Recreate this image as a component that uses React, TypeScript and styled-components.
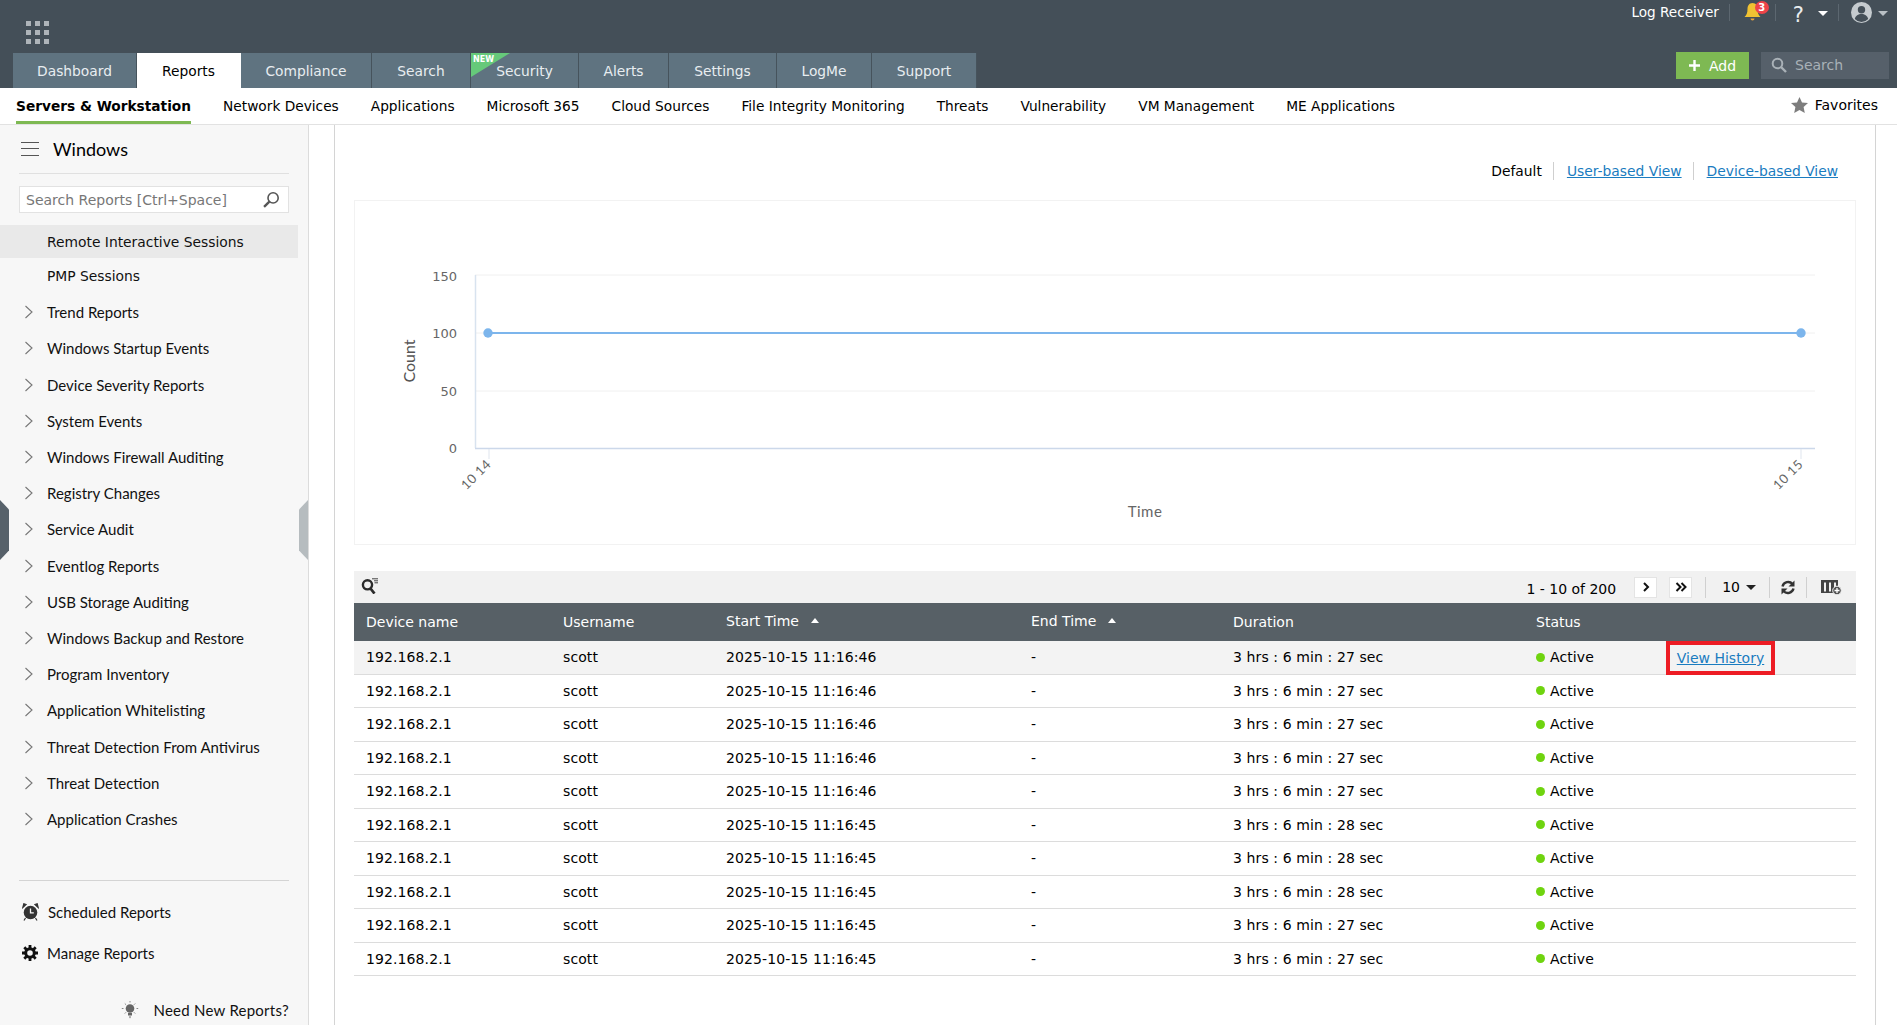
import React from 'react';
import styled, { createGlobalStyle } from 'styled-components';

const Global = createGlobalStyle`
  html, body { margin: 0; padding: 0; background: #fff; }
  body { width: 1897px; height: 1025px; overflow: hidden; font-family: "DejaVu Sans", sans-serif; font-size: 14px; color: #000; }
  * { box-sizing: border-box; }
`;
const Page = styled.div`display: flex; flex-direction: column; width: 1897px; height: 1025px; overflow: hidden;`;
const Header = styled.header`background: #444f58; height: 88px; display: flex; flex-direction: column; flex: none;`;
const TopRow = styled.div`height: 53px; display: flex; justify-content: space-between; padding: 0 9px 0 26px;`;
const AppGrid = styled.div`margin-top: 21px; width: 23px; height: 23px; display: grid; grid-template-columns: repeat(3, 5px); grid-auto-rows: 5px; justify-content: space-between; align-content: space-between;`;
const AppDot = styled.span`background: #aeb4b9;`;
const Utils = styled.div`display: flex; align-items: flex-start; height: 24px; color: #fff;`;
const UtilText = styled.span`font-size: 13.6px; line-height: 25px; color: #fff;`;
const UtilSep = styled.span<{ $ml: number }>`width: 1px; height: 17px; margin: 4px 0 0 ${p => p.$ml}px; background: #5c6770;`;
const BellWrap = styled.span`position: relative; margin-left: 14px; margin-top: 2px; width: 17px; height: 20px; display: block;`;
const Badge = styled.span`position: absolute; left: 11px; top: -1px; width: 14px; height: 13px; border-radius: 50%; background: #ee4349; color: #fff; font-size: 10px; font-weight: 700; line-height: 13px; text-align: center;`;
const Help = styled.span`font-size: 21px; line-height: 30px; margin-left: 17px; color: #e9ecee;`;
const AvatarWrap = styled.span`display: block; margin: 2px 0 0 12px;`;
const Caret = styled.span<{ $c?: string; $ml: number; $mt: number }>`width: 0; height: 0; border-left: 5px solid transparent; border-right: 5px solid transparent; border-top: 5px solid ${p => p.$c || '#fff'}; margin-left: ${p => p.$ml}px; margin-top: ${p => p.$mt}px;`;
const TabRow = styled.div`height: 35px; display: flex; justify-content: space-between; padding: 0 8px 0 13px;`;
const Tabs = styled.nav`display: flex; align-items: stretch;`;
const Tab = styled.a<{ $w: number; $active?: boolean }>`position: relative; width: ${p => p.$w}px; display: flex; align-items: center; justify-content: center; font-size: 13.8px; color: ${p => p.$active ? '#000' : '#e8edf0'}; background: ${p => p.$active ? '#fff' : '#5f7380'}; border-right: 1px solid ${p => p.$active ? '#fff' : '#46535c'};`;
const Ribbon = styled.span`position: absolute; left: 0; top: 0; width: 39px; height: 24px; background: #66c97a; clip-path: polygon(0 0, 100% 0, 0 100%); color: #fff; font-size: 8px; font-weight: 700; line-height: 13px; padding-left: 2px;`;
const TabActions = styled.div`display: flex; align-items: flex-start; gap: 12px; margin-top: -1px;`;
const AddButton = styled.button`width: 73px; height: 27px; border: 0; background: #7eb953; color: #fff; font: 14px "DejaVu Sans", sans-serif; display: flex; align-items: center; justify-content: center; gap: 9px; padding: 0;`;
const TopSearch = styled.div`width: 128px; height: 27px; background: #56606a; color: #a9b1b7; display: flex; align-items: center; gap: 8px; padding: 0 0 1px 10px; font-size: 14px;`;
const SubNav = styled.nav`height: 37px; flex: none; display: flex; align-items: stretch; padding: 0 19px 0 16px; border-bottom: 1px solid #e2e2e2; background: #fff;`;
const SubItem = styled.a<{ $active?: boolean }>`margin-right: 32px; height: 36px; line-height: 36px; font-size: 13.72px; color: #000; font-weight: ${p => p.$active ? 700 : 400}; border-bottom: 3px solid ${p => p.$active ? '#7eb953' : 'transparent'}; white-space: nowrap;`;
const Favorites = styled.div`margin-left: auto; display: flex; align-items: center; gap: 7px; font-size: 14px; height: 34px;`;
const Body = styled.div`flex: 1; display: flex; min-height: 0; position: relative;`;
const Sidebar = styled.aside`width: 309px; flex: none; background: #f7f7f7; border-right: 1px solid #dcdcdc; display: flex; flex-direction: column; font-family: Lato, sans-serif; position: relative;`;
const SideHead = styled.div`margin: 0 19px; height: 49px; display: flex; align-items: center; gap: 14px; border-bottom: 1px solid #e0e0e0; padding: 0 0 1px 2px; font-size: 18px; color: #000;`;
const Burger = styled.span`width: 18px; height: 14px; border-top: 1px solid #555; border-bottom: 1px solid #555; position: relative; &::after { content: ''; position: absolute; left: 0; right: 0; top: 5.5px; height: 1px; background: #555; }`;
const SideSearch = styled.div`margin: 12px 19px 12px; height: 27px; border: 1px solid #e2e2e2; background: #fff; display: flex; align-items: center; justify-content: space-between; padding: 0 8px 0 6px; color: #777; font-family: "DejaVu Sans", sans-serif; font-size: 14px;`;
const SideItems = styled.div`display: flex; flex-direction: column; width: 298px;`;
const LeafItem = styled.a<{ $active?: boolean }>`height: ${p => p.$active ? 33 : 36.2}px; flex: none; display: flex; align-items: center; padding-left: 47px; font-family: "DejaVu Sans", sans-serif; font-size: 13.85px; color: #111; background: ${p => p.$active ? '#e9e9e9' : 'transparent'}; white-space: nowrap;`;
const SideItem = styled.a`height: 36.2px; flex: none; display: flex; align-items: center; gap: 13px; padding-left: 24px; font-size: 15px; color: #111; white-space: nowrap;`;
const SideFoot = styled.div`position: absolute; left: 19px; right: 19px; top: 755px; border-top: 1px solid #d4d4d4; padding-top: 10px; display: flex; flex-direction: column;`;
const FootItem = styled.a`height: 41px; display: flex; align-items: center; gap: 9px; padding-left: 3px; font-size: 15px; color: #111;`;
const NeedNew = styled.a`margin-top: 28px; display: flex; justify-content: flex-end; align-items: center; gap: 14px; font-size: 15px; color: #111; letter-spacing: .25px;`;
const Handle = styled.span<{ $left: number; $dark?: boolean }>`position: absolute; left: ${p => p.$left}px; top: 375px; width: 9px; height: 60px; background: ${p => p.$dark ? '#57616a' : '#b6bcbf'}; clip-path: ${p => p.$dark ? 'polygon(0 0, 100% 16%, 100% 84%, 0 100%)' : 'polygon(100% 0, 0 16%, 0 84%, 100% 100%)'}; z-index: 2;`;
const Gutter = styled.div`width: 26px; flex: none; border-right: 1px solid #d4d4d4;`;
const Main = styled.main`width: 1541px; flex: none; border-right: 1px solid #d4d4d4; padding: 0 19px; display: flex; flex-direction: column;`;
const Views = styled.div`height: 75px; display: flex; justify-content: flex-end; align-items: flex-start; padding: 35px 18px 0 0; font-size: 13.85px;`;
const ViewText = styled.span`line-height: 22px;`;
const ViewLink = styled.a`line-height: 22px; color: #1a7cc0; text-decoration: underline;`;
const ViewSep = styled.span`width: 1px; height: 18px; margin: 2px 13px 2px 11px; background: #cfcfcf;`;
const ChartBox = styled.section`height: 345px; border: 1px solid #f2f2f2; flex: none;`;
const TableBar = styled.div`margin-top: 26px; height: 32px; background: #f1f1f1; display: flex; align-items: center; justify-content: space-between; padding: 0 14px 0 7px;`;
const BarLeft = styled.span`display: block; height: 16px; margin-top: -3px;`;
const BarRight = styled.div`display: flex; align-items: center; height: 32px;`;
const PageText = styled.span`font-size: 14px; margin-right: 18px; padding-top: 4px;`;
const PageBtn = styled.span`width: 23px; height: 21px; background: #fff; border: 1px solid #e4e4e4; display: flex; align-items: center; justify-content: center; margin-right: 12px;`;
const BarSep = styled.span<{ $ml?: number; $mr?: number }>`width: 1px; height: 21px; background: #d0d0d0; margin-left: ${p => p.$ml ?? 0}px; margin-right: ${p => p.$mr ?? 0}px;`;
const PageSize = styled.span`display: flex; align-items: center; gap: 6px; font-size: 14px;`;
const rowGrid = `display: grid; grid-template-columns: 197px 163px 305px 202px 303px 142px 1fr;`;
const HeadRow = styled.div`${rowGrid} height: 38px; background: #576066; color: #fff; font-size: 14px; align-items: center;`;
const HeadCell = styled.div<{ $up?: boolean }>`padding-left: 12px; display: flex; align-items: center; gap: 12px; margin-top: ${p => p.$up ? -3 : 0}px;`;
const SortUp = styled.span`width: 0; height: 0; border-left: 4px solid transparent; border-right: 4px solid transparent; border-bottom: 5px solid #fff;`;
const Row = styled.div<{ $first?: boolean }>`${rowGrid} height: 33.5px; align-items: center; border-bottom: 1px solid #dcdcdc; background: ${p => p.$first ? '#f3f3f3' : '#fff'}; font-size: 14px; letter-spacing: .1px;`;
const Cell = styled.div`padding-left: 12px; white-space: nowrap;`;
const StatusCell = styled(Cell)`display: flex; align-items: center; gap: 5px;`;
const Dot = styled.span`width: 9px; height: 9px; border-radius: 50%; background: #6fd40f;`;
const HistoryCell = styled.div`position: relative; align-self: stretch;`;
const History = styled.a`position: absolute; left: 0; top: 0; width: 109px; height: 34px; border: 4px solid #ed1c24; display: flex; align-items: center; justify-content: center; color: #1a7cc0; text-decoration: underline; font-size: 14px; letter-spacing: 0; z-index: 1;`;

const Chevron = () => (
  <svg width="10" height="14" viewBox="0 0 10 14" fill="none"><path d="M1.5 1l6.5 6-6.5 6" stroke="#777" strokeWidth="1.1" /></svg>
);
const Loupe = ({ c, s, sw = 2 }: { c: string; s: number; sw?: number }) => (
  <svg width={s} height={s} viewBox="0 0 16 16" fill="none"><circle cx="6.5" cy="6.5" r="4.8" stroke={c} strokeWidth={sw} /><path d="M10 10l5 5" stroke={c} strokeWidth={sw + 0.4} /></svg>
);
const LoupeFlipped = () => (
  <svg width="17" height="17" viewBox="0 0 16 16" fill="none"><circle cx="9.5" cy="6.5" r="4.800" stroke="#555" strokeWidth="1.500" /><path d="M6 10l-5 5" stroke="#555" strokeWidth="2.200" /></svg>
);
const Bell = () => (
  <svg width="17" height="20" viewBox="0 0 17 20"><path d="M8.5 1C5 1 3.5 4 3.5 7c0 4-1 6-3 8h16c-2-2-3-4-3-8 0-3-1.500-6-5-6z" fill="#f1c232" /><path d="M6.500 16.500h4a2 2 0 0 1-4 0z" fill="#e8a33a" /></svg>
);
const Avatar = () => (
  <svg width="21" height="21" viewBox="0 0 21 21"><circle cx="10.500" cy="10.500" r="10.500" fill="#c5cbcf" /><circle cx="10.500" cy="7.800" r="3.700" fill="#444f58" /><path d="M3.800 17c.8-3.500 3.500-5 6.700-5s5.900 1.500 6.700 5a9 9 0 0 1-13.400 0z" fill="#444f58" /></svg>
);
const Star = () => (
  <svg width="17" height="16" viewBox="0 0 17 16"><path d="M8.500 0l2.500 5.400 6 .7-4.400 4 1.200 5.900-5.300-3-5.300 3 1.200-5.900L.0 6.100l6-.7z" fill="#7d7d7d" /></svg>
);
const Clock = () => (
  <svg width="17" height="18" viewBox="0 0 17 18"><circle cx="8.500" cy="9.500" r="6.800" fill="#333" /><path d="M8.500 5.500v4.300h3.300" stroke="#f7f7f7" strokeWidth="1.300" fill="none" /><path d="M0.800 4.500L4 1.500 1.800 0.800zM16.200 4.500L13 1.500l2.200-.7zM3.500 15l-1.500 2.500M13.500 15l1.500 2.500" stroke="#333" fill="#333" strokeWidth="1.200" /></svg>
);
const Gear = () => (
  <svg width="16" height="16" viewBox="0 0 16 16"><circle cx="8" cy="8" r="4.300" fill="none" stroke="#111" strokeWidth="3" /><path d="M8 0v3M8 13v3M0 8h3M13 8h3M2.300 2.300l2.100 2.100M11.600 11.600l2.100 2.100M13.700 2.300l-2.100 2.100M4.400 11.600l-2.100 2.100" stroke="#111" strokeWidth="2.800" /></svg>
);
const Bulb = () => (
  <svg width="18" height="18" viewBox="0 0 18 18" fill="none"><circle cx="9" cy="7.500" r="4.300" fill="#666" /><path d="M7 12h4v2.500H7zM8 15.500h2l-1 2z" fill="#666" /><path d="M9 0v1.500M2.500 7.500H.8M17.200 7.500h-1.700M3.800 2.500l1.200 1.200M14.200 2.500L13 3.700M3.800 12.500l1.200-1.200M14.200 12.500L13 11.300" stroke="#888" /></svg>
);
const FilterSearch = () => (
  <svg width="18" height="16" viewBox="0 0 18 16" fill="none"><circle cx="6.500" cy="6.800" r="4.600" stroke="#2b2b2b" strokeWidth="2.400" /><path d="M9.500 10.500l4 5" stroke="#2b2b2b" strokeWidth="2.800" /><path d="M11 .8h6M13 2.800h4M13.500 4.800H17" stroke="#444" /></svg>
);
const Next = () => (
  <svg width="8" height="10" viewBox="0 0 8 10" fill="none"><path d="M2 1l4 4-4 4" stroke="#111" strokeWidth="2" /></svg>
);
const Last = () => (
  <svg width="12" height="10" viewBox="0 0 12 10" fill="none"><path d="M1.500 1l4 4-4 4M6.500 1l4 4-4 4" stroke="#111" strokeWidth="2" /></svg>
);
const Refresh = () => (
  <svg width="16" height="15" viewBox="0 0 15 15" fill="none"><path d="M2 6.500A5.800 5.800 0 0 1 12 4" stroke="#333" strokeWidth="2.400" /><path d="M14 .5v6H8z" fill="#333" /><path d="M13 8.500A5.800 5.800 0 0 1 3 11" stroke="#333" strokeWidth="2.400" /><path d="M1 14.500v-6h6z" fill="#333" /></svg>
);
const Columns = () => (
  <svg width="21" height="16" viewBox="0 0 21 16"><path d="M0 1h17v2.500H0zM0 1h3v13H0zM5 1h3v13H5zM10 1h3v13h-3zM15 1h2v8h-2zM0 12.500h11V14H0z" fill="#444" /><circle cx="16" cy="11.500" r="4.300" fill="#555" stroke="#f1f1f1" /><path d="M13.500 11.500h5M16 9v5" stroke="#fff" strokeWidth="1.300" /></svg>
);

const Chart = () => {
  const axis = { fill: '#666', fontSize: 13, fontFamily: '"DejaVu Sans", sans-serif' };
  return (
    <svg width="1500" height="343" viewBox="355 201 1500 343">
      {[275, 333, 391].map(y => <line key={y} x1="475" x2="1815" y1={y} y2={y} stroke="#f0f0f0" strokeWidth="1" />)}
      <line x1="475.500" x2="475.500" y1="275" y2="448" stroke="#d8e3ef" strokeWidth="1.500" />
      <line x1="475" x2="1815" y1="448.500" y2="448.500" stroke="#ccd8ea" strokeWidth="1.500" />
      <line x1="489" x2="489" y1="449" y2="459" stroke="#dfe5ee" />
      <line x1="1801" x2="1801" y1="449" y2="459" stroke="#dfe5ee" />
      <line x1="488" x2="1801" y1="333" y2="333" stroke="#7cb5ec" strokeWidth="2" />
      <circle cx="488" cy="333" r="4.700" fill="#7cb5ec" />
      <circle cx="1801" cy="333" r="4.700" fill="#7cb5ec" />
      {[['150', 281], ['100', 338], ['50', 396], ['0', 453]].map(([t, y]) => (
        <text key={t} x="457" y={y} textAnchor="end" {...axis}>{t}</text>
      ))}
      <text transform="translate(415 361) rotate(-90)" textAnchor="middle" fill="#555" fontSize="16" fontFamily="Lato, sans-serif">Count</text>
      <text transform="translate(492 465) rotate(-45)" textAnchor="end" fill="#666" fontSize="13" fontFamily="Lato, sans-serif" letterSpacing=".5">10 14</text>
      <text transform="translate(1804 465) rotate(-45)" textAnchor="end" fill="#666" fontSize="13" fontFamily="Lato, sans-serif" letterSpacing=".5">10 15</text>
      <text x="1145" y="517" textAnchor="middle" fill="#666" fontSize="15" fontFamily="Lato, sans-serif" letterSpacing=".5">Time</text>
    </svg>
  );
};

const sideItems = ['Trend Reports', 'Windows Startup Events', 'Device Severity Reports', 'System Events', 'Windows Firewall Auditing', 'Registry Changes', 'Service Audit', 'Eventlog Reports', 'USB Storage Auditing', 'Windows Backup and Restore', 'Program Inventory', 'Application Whitelisting', 'Threat Detection From Antivirus', 'Threat Detection', 'Application Crashes'];
const subItems = ['Network Devices', 'Applications', 'Microsoft 365', 'Cloud Sources', 'File Integrity Monitoring', 'Threats', 'Vulnerability', 'VM Management', 'ME Applications'];
const rows = [
  ['46', '27'], ['46', '27'], ['46', '27'], ['46', '27'], ['46', '27'],
  ['45', '28'], ['45', '28'], ['45', '28'], ['45', '27'], ['45', '27'],
];

export default function App() {
  return (
    <Page>
      <Global />
      <Header>
        <TopRow>
          <AppGrid>{Array.from({ length: 9 }, (_, i) => <AppDot key={i} />)}</AppGrid>
          <Utils>
            <UtilText>Log Receiver</UtilText>
            <UtilSep $ml={10} />
            <BellWrap><Bell /><Badge>3</Badge></BellWrap>
            <UtilSep $ml={14} />
            <Help>?</Help>
            <Caret $ml={14} $mt={11} />
            <UtilSep $ml={10} />
            <AvatarWrap><Avatar /></AvatarWrap>
            <Caret $c="#b9c0c5" $ml={6} $mt={11} />
          </Utils>
        </TopRow>
        <TabRow>
          <Tabs>
            <Tab $w={124}>Dashboard</Tab>
            <Tab $w={104} $active>Reports</Tab>
            <Tab $w={131}>Compliance</Tab>
            <Tab $w={99}>Search</Tab>
            <Tab $w={108}><Ribbon>NEW</Ribbon>Security</Tab>
            <Tab $w={90}>Alerts</Tab>
            <Tab $w={108}>Settings</Tab>
            <Tab $w={95}>LogMe</Tab>
            <Tab $w={105}>Support</Tab>
          </Tabs>
          <TabActions>
            <AddButton>
              <svg width="11" height="11" viewBox="0 0 11 11"><path d="M5.500 0v11M0 5.500h11" stroke="#fff" strokeWidth="2.400" /></svg>
              Add
            </AddButton>
            <TopSearch><Loupe c="#a9b1b7" s={16} />Search</TopSearch>
          </TabActions>
        </TabRow>
      </Header>
      <SubNav>
        <SubItem $active>Servers &amp; Workstation</SubItem>
        {subItems.map(s => <SubItem key={s}>{s}</SubItem>)}
        <Favorites><Star />Favorites</Favorites>
      </SubNav>
      <Body>
        <Sidebar>
          <SideHead><Burger />Windows</SideHead>
          <SideSearch>Search Reports [Ctrl+Space]<LoupeFlipped /></SideSearch>
          <SideItems>
            <LeafItem $active>Remote Interactive Sessions</LeafItem>
            <LeafItem>PMP Sessions</LeafItem>
            {sideItems.map(s => <SideItem key={s}><Chevron />{s}</SideItem>)}
          </SideItems>
          <SideFoot>
            <FootItem><Clock />Scheduled Reports</FootItem>
            <FootItem><Gear />Manage Reports</FootItem>
            <NeedNew><Bulb />Need New Reports?</NeedNew>
          </SideFoot>
          <Handle $left={0} $dark />
          <Handle $left={299} />
        </Sidebar>
        <Gutter />
        <Main>
          <Views>
            <ViewText>Default</ViewText>
            <ViewSep />
            <ViewLink>User-based View</ViewLink>
            <ViewSep />
            <ViewLink>Device-based View</ViewLink>
          </Views>
          <ChartBox><Chart /></ChartBox>
          <TableBar>
            <BarLeft><FilterSearch /></BarLeft>
            <BarRight>
              <PageText>1 - 10 of 200</PageText>
              <PageBtn><Next /></PageBtn>
              <PageBtn><Last /></PageBtn>
              <BarSep $ml={1} $mr={16} />
              <PageSize>10<Caret $c="#222" $ml={0} $mt={1} /></PageSize>
              <BarSep $ml={13} $mr={10} />
              <Refresh />
              <BarSep $ml={10} $mr={14} />
              <Columns />
            </BarRight>
          </TableBar>
          <HeadRow>
            <HeadCell>Device name</HeadCell>
            <HeadCell>Username</HeadCell>
            <HeadCell $up>Start Time<SortUp /></HeadCell>
            <HeadCell $up>End Time<SortUp /></HeadCell>
            <HeadCell>Duration</HeadCell>
            <HeadCell>Status</HeadCell>
            <div />
          </HeadRow>
          {rows.map(([sec, dur], i) => (
            <Row key={i} $first={i === 0}>
              <Cell>192.168.2.1</Cell>
              <Cell>scott</Cell>
              <Cell>2025-10-15 11:16:{sec}</Cell>
              <Cell>-</Cell>
              <Cell>3 hrs : 6 min : {dur} sec</Cell>
              <StatusCell><Dot />Active</StatusCell>
              <HistoryCell>{i === 0 && <History>View History</History>}</HistoryCell>
            </Row>
          ))}
        </Main>
      </Body>
    </Page>
  );
}
